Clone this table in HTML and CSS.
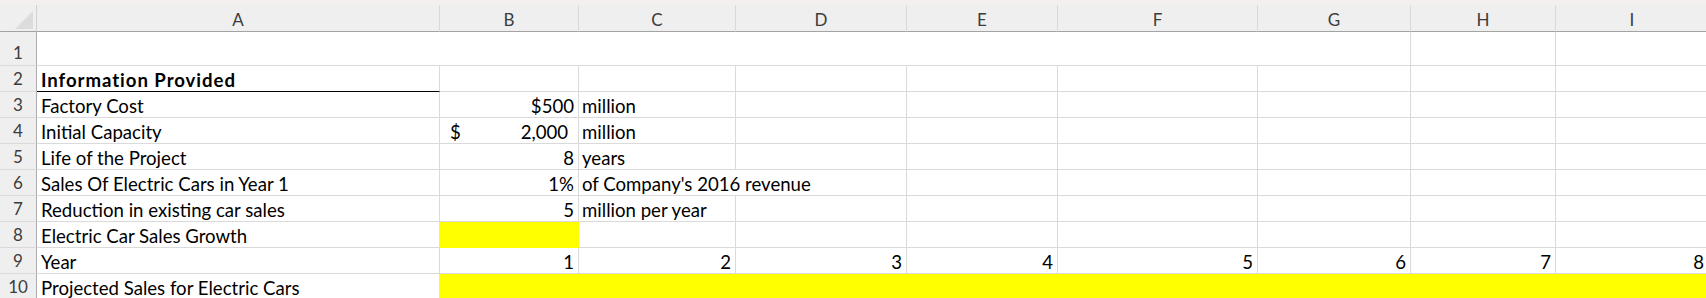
FILE: index.html
```html
<!DOCTYPE html>
<html lang="en">
<head>
<meta charset="utf-8">
<title>Sheet</title>
<link rel="stylesheet" href="styles.css">
</head>
<body>
<div class="band"></div>
<div class="sheet">
  <div class="hdr corner"><svg class="tri" width="18" height="18" viewBox="0 0 18 18"><polygon points="18,0 18,18 0,18" fill="#dcdcdc"/></svg></div>
  <div class="hdr col">A</div>
  <div class="hdr col">B</div>
  <div class="hdr col">C</div>
  <div class="hdr col">D</div>
  <div class="hdr col">E</div>
  <div class="hdr col">F</div>
  <div class="hdr col">G</div>
  <div class="hdr col">H</div>
  <div class="hdr col">I</div>

  <div class="rh">1</div>
  <div class="c merged"></div>
  <div class="c"></div>
  <div class="c"></div>

  <div class="rh">2</div>
  <div class="c title">Information Provided</div>
  <div class="c"></div><div class="c"></div><div class="c"></div><div class="c"></div><div class="c"></div><div class="c"></div><div class="c"></div><div class="c"></div>

  <div class="rh">3</div>
  <div class="c">Factory Cost</div>
  <div class="c num">$500</div>
  <div class="c over">million</div>
  <div class="c"></div><div class="c"></div><div class="c"></div><div class="c"></div><div class="c"></div><div class="c"></div>

  <div class="rh">4</div>
  <div class="c">Initial Capacity</div>
  <div class="c acct"><span>$</span><span>2,000</span></div>
  <div class="c over">million</div>
  <div class="c"></div><div class="c"></div><div class="c"></div><div class="c"></div><div class="c"></div><div class="c"></div>

  <div class="rh">5</div>
  <div class="c">Life of the Project</div>
  <div class="c num">8</div>
  <div class="c over">years</div>
  <div class="c"></div><div class="c"></div><div class="c"></div><div class="c"></div><div class="c"></div><div class="c"></div>

  <div class="rh">6</div>
  <div class="c">Sales Of Electric Cars in Year 1</div>
  <div class="c num">1%</div>
  <div class="c over spill">of Company's 2016 revenue</div>
  <div class="c"></div><div class="c"></div><div class="c"></div><div class="c"></div><div class="c"></div>

  <div class="rh">7</div>
  <div class="c">Reduction in existing car sales</div>
  <div class="c num">5</div>
  <div class="c over">million per year</div>
  <div class="c"></div><div class="c"></div><div class="c"></div><div class="c"></div><div class="c"></div><div class="c"></div>

  <div class="rh">8</div>
  <div class="c before-fill">Electric Car Sales Growth</div>
  <div class="c fill"></div>
  <div class="c"></div><div class="c"></div><div class="c"></div><div class="c"></div><div class="c"></div><div class="c"></div><div class="c"></div>

  <div class="rh">9</div>
  <div class="c">Year</div>
  <div class="c num">1</div>
  <div class="c num">2</div>
  <div class="c num">3</div>
  <div class="c num">4</div>
  <div class="c num">5</div>
  <div class="c num">6</div>
  <div class="c num">7</div>
  <div class="c num">8</div>

  <div class="rh">10</div>
  <div class="c before-fill">Projected Sales for Electric Cars</div>
  <div class="c fill"></div><div class="c fill"></div><div class="c fill"></div><div class="c fill"></div><div class="c fill"></div><div class="c fill"></div><div class="c fill"></div><div class="c fill"></div>
</div>
</body>
</html>
```
FILE: styles.css
```css
html, body {
  margin: 0;
  padding: 0;
  background: #ffffff;
  overflow: hidden;
}
body {
  width: 1706px;
  height: 298px;
  font-family: Lato, "Open Sans", sans-serif;
  color: #000;
}
.band {
  height: 5px;
  background: #f3efef;
}
.sheet {
  display: grid;
  grid-template-columns: 37px 403px 139px 157px 171px 151px 200px 153px 145px 153px;
  grid-template-rows: 27px 34px repeat(9, 26px);
  width: 1709px;
}
.sheet > div {
  box-sizing: border-box;
  min-width: 0;
}
.hdr {
  background: #efefef;
  border-right: 1px solid #d9d9d9;
  border-bottom: 1px solid #a3a3a3;
  color: #3c3c3c;
  font-size: 17px;
  line-height: 20px;
  display: flex;
  align-items: flex-end;
  justify-content: center;
  padding-bottom: 1px;
}
.corner {
  justify-content: flex-end;
  padding: 0 3px 2px 0;
  border-right-color: #d0d0d0;
}
.tri {
  display: block;
}
.rh {
  background: #efefef;
  border-right: 1px solid #acacac;
  border-bottom: 1px solid #dadada;
  color: #3c3c3c;
  font-size: 17px;
  line-height: 20px;
  display: flex;
  align-items: flex-end;
  justify-content: center;
  padding-bottom: 2px;
}
.c {
  border-right: 1px solid #dadada;
  border-bottom: 1px solid #dadada;
  font-size: 18.6px;
  line-height: 22px;
  display: flex;
  align-items: flex-end;
  padding: 0 3px 0 4px;
  white-space: nowrap;
}
.merged {
  grid-column: span 7;
}
.title {
  font-weight: bold;
  letter-spacing: 0.95px;
  border-bottom-color: #000;
}
.num {
  justify-content: flex-end;
  padding-right: 4px;
}
.acct {
  justify-content: space-between;
  padding: 0 10px 0 10px;
}
.over {
  padding-left: 3px;
}
.spill {
  grid-column: span 2;
  overflow: visible;
}
.fill {
  background: #ffff00;
  border-right-color: #ffff00;
  border-bottom-color: #ffff00;
}
.before-fill {
  border-right-color: #ffff00;
}
```
